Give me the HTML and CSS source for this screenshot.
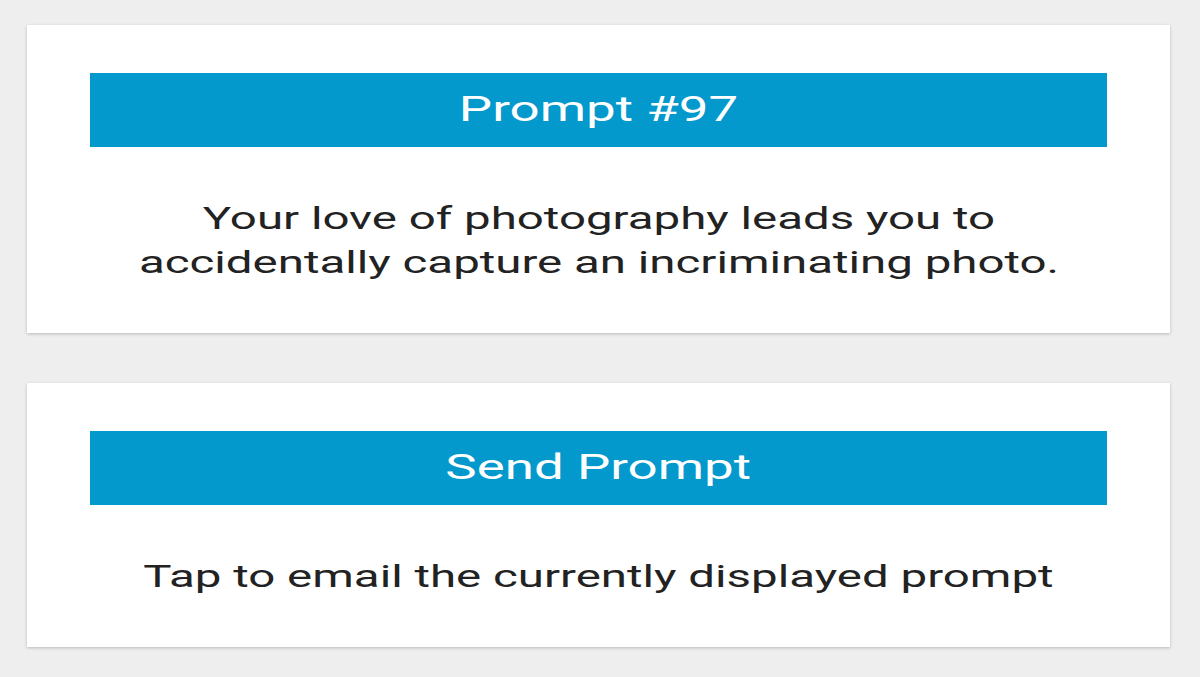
FILE: index.html
```html
<!DOCTYPE html>
<html>
<head>
  <meta charset="utf-8">
  <title>Prompts</title>
  <link rel="stylesheet" href="styles.css">
</head>
<body>
  <!-- current prompt -->
  <div class="card">
    <div class="bar"><span class="wide">Prompt #97</span></div>
    <p class="card-text"><span class="wide text-block">Your love of photography leads you to accidentally capture an incriminating photo.</span></p>
  </div>

  <!-- send -->
  <div class="card">
    <div class="bar"><span class="wide">Send Prompt</span></div>
    <p class="card-text"><span class="wide text-block">Tap to email the currently displayed prompt</span></p>
  </div>
</body>
</html>
```

FILE: styles.css
```css
body {
  margin: 0;
  padding: 25px 30px 0 27px;
  background: #eeeeee;
  font-family: Roboto, "Noto Sans", Arial, sans-serif;
}

.card {
  background: #fff;
  box-shadow: 0 1px 3px rgba(0, 0, 0, 0.22);
  padding: 48px 63px 48px 63px;
  margin-bottom: 50px;
}

.bar {
  background: #0399cc;
  color: #fff;
  height: 74px;
  line-height: 74px;
  font-size: 35px;
  text-align: center;
}

.wide {
  display: inline-block;
  transform: scaleX(1.51);
}

.card-text {
  margin: 50px 0 0 0;
  text-align: center;
  font-size: 31px;
  line-height: 44px;
  color: #222;
}

.text-block {
  max-width: 640px;
  transform: scaleX(1.53);
}
```
